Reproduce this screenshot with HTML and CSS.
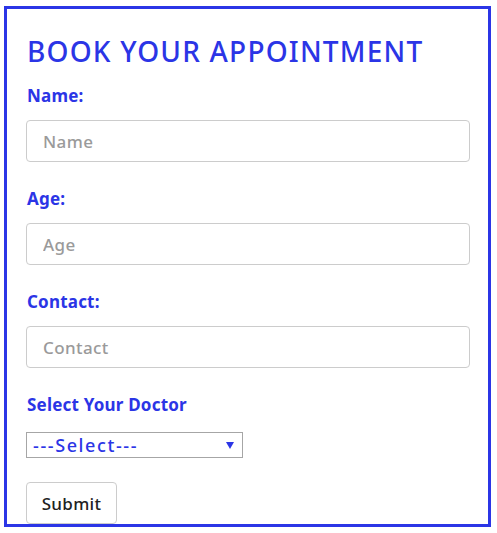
FILE: index.html
```html
<!DOCTYPE html>
<html>
<head>
<meta charset="utf-8">
<link rel="stylesheet" href="styles.css">
</head>
<body>
<div class="card">
  <h1 class="title">BOOK YOUR APPOINTMENT</h1>
  <form class="form">
    <label class="label">Name:</label>
    <input class="field" type="text" placeholder="Name">
    <label class="label">Age:</label>
    <input class="field" type="text" placeholder="Age">
    <label class="label">Contact:</label>
    <input class="field" type="text" placeholder="Contact">
    <label class="label label-doctor">Select Your Doctor</label>
    <div class="select-wrap">
      <select class="select">
        <option>---Select---</option>
      </select>
      <svg class="caret" width="8" height="7" viewBox="0 0 8 7"><path d="M0 0H8L4 7Z" fill="#2b35e6"/></svg>
    </div>
    <button class="submit" type="button">Submit</button>
  </form>
</div>
</body>
</html>
```
FILE: styles.css
```css
html, body {
  margin: 0;
  padding: 0;
  background: #fff;
}
body {
  font-family: "Noto Sans", "Open Sans", sans-serif;
}
.card {
  box-sizing: border-box;
  margin: 6px 0 0 4px;
  width: 487px;
  height: 521px;
  border: 3px solid #2b35e6;
  padding: 25px 18px 0 19px;
  overflow: hidden;
}
.title {
  margin: 0;
  font-size: 28px;
  line-height: 34px;
  font-weight: 500;
  letter-spacing: 1.2px;
  color: #2b35e6;
  padding-left: 1px;
}
.form {
  display: flex;
  flex-direction: column;
  align-items: flex-start;
  margin-top: 18px;
}
.label {
  display: block;
  font-size: 17px;
  line-height: 20px;
  font-weight: 700;
  letter-spacing: 0.2px;
  color: #2b35e6;
  margin: 0 0 14px 1px;
}
.field {
  box-sizing: border-box;
  width: 444px;
  height: 42px;
  border: 1px solid #ccc;
  border-radius: 4px;
  padding: 0 16px;
  font-family: inherit;
  font-size: 17px;
  font-weight: 500;
  letter-spacing: 0.4px;
  color: #333;
  margin: 0 0 27px 0;
  outline: none;
}
.field::placeholder {
  color: #9a9a9a;
}
.label-doctor {
  margin-bottom: 17px;
}
.select-wrap {
  position: relative;
  width: 217px;
  height: 26px;
  margin-bottom: 24px;
}
.select {
  appearance: none;
  -webkit-appearance: none;
  box-sizing: border-box;
  width: 217px;
  height: 26px;
  border: 1px solid #a6a6a6;
  border-radius: 0;
  background: #fff;
  color: #2b35e6;
  font-family: inherit;
  font-size: 18px;
  font-weight: 500;
  letter-spacing: 1.6px;
  line-height: 24px;
  padding: 0 0 0 6px;
  margin: 0;
  outline: none;
}
.caret {
  position: absolute;
  left: 200px;
  top: 10px;
  pointer-events: none;
}
.submit {
  box-sizing: border-box;
  width: 91px;
  height: 42px;
  border: 1px solid #ccc;
  border-radius: 4px;
  background: #fff;
  color: #222;
  font-family: inherit;
  font-size: 17px;
  font-weight: 500;
  letter-spacing: 0.3px;
  padding: 0;
}
```
